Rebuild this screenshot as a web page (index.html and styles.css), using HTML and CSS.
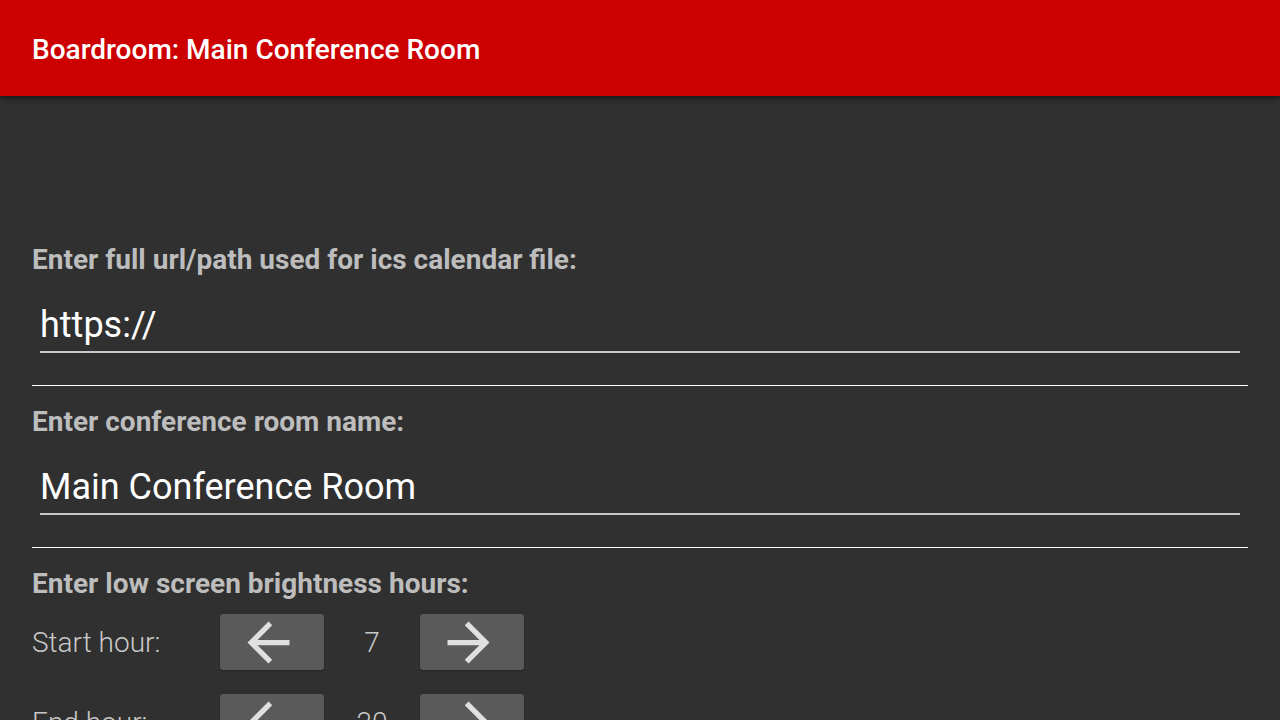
FILE: index.html
```html
<!DOCTYPE html>
<html>
<head>
<meta charset="utf-8">
<link rel="stylesheet" href="styles.css">
</head>
<body>
<header class="appbar">
  <h1 class="title">Boardroom: Main Conference Room</h1>
</header>
<main class="content">
  <section class="field">
    <label class="label">Enter full url/path used for ics calendar file:</label>
    <div class="input">https://</div>
  </section>
  <hr class="divider">
  <section class="field">
    <label class="label">Enter conference room name:</label>
    <div class="input">Main Conference Room</div>
  </section>
  <hr class="divider">
  <section class="hours">
    <label class="label">Enter low screen brightness hours:</label>
    <div class="hour-row">
      <span class="hour-label">Start hour:</span>
      <button class="step"><svg viewBox="0 0 24 24" width="63" height="63"><path d="M20 11H7.83l5.59-5.59L12 4l-8 8 8 8 1.41-1.41L7.83 13H20v-2z" fill="#e0e0e0"/></svg></button>
      <span class="hour-value">7</span>
      <button class="step"><svg viewBox="0 0 24 24" width="63" height="63"><path d="M12 4l-1.41 1.41L16.17 11H4v2h12.17l-5.58 5.59L12 20l8-8z" fill="#e0e0e0"/></svg></button>
    </div>
    <div class="hour-row">
      <span class="hour-label">End hour:</span>
      <button class="step"><svg viewBox="0 0 24 24" width="63" height="63"><path d="M20 11H7.83l5.59-5.59L12 4l-8 8 8 8 1.41-1.41L7.83 13H20v-2z" fill="#e0e0e0"/></svg></button>
      <span class="hour-value">20</span>
      <button class="step"><svg viewBox="0 0 24 24" width="63" height="63"><path d="M12 4l-1.41 1.41L16.17 11H4v2h12.17l-5.58 5.59L12 20l8-8z" fill="#e0e0e0"/></svg></button>
    </div>
  </section>
</main>
</body>
</html>
```
FILE: styles.css
```css
html, body {
  margin: 0;
  padding: 0;
  height: 100%;
  overflow: hidden;
}
body {
  background: #303030;
  font-family: Roboto, "Liberation Sans", sans-serif;
  color: #ffffff;
}
.appbar {
  height: 96px;
  background: #cc0000;
  display: flex;
  align-items: center;
  padding: 0 32px;
  box-shadow: 0 2px 4px rgba(0,0,0,0.35), 0 4px 8px rgba(0,0,0,0.2);
  position: relative;
  z-index: 1;
}
.title {
  margin: 0;
  font-size: 28px;
  font-weight: 500;
  color: #ffffff;
  line-height: 32px;
  padding-top: 4px;
}
.content {
  padding: 148px 32px 0;
}
.label {
  display: block;
  font-size: 28px;
  font-weight: 700;
  line-height: 32px;
  color: #bdbdbd;
}
.input {
  margin: 29px 8px 0;
  font-size: 36px;
  line-height: 40px;
  padding-bottom: 6px;
  border-bottom: 2px solid #c8c8c8;
  color: #ffffff;
}
.divider {
  margin: 32px 0 20px;
  border: 0;
  height: 1px;
  background: #ffffff;
}
.hour-row {
  display: flex;
  align-items: center;
  height: 56px;
  margin-top: 14px;
}
.hour-row + .hour-row {
  margin-top: 24px;
}
.hour-label {
  width: 188px;
  font-size: 28px;
  font-weight: 300;
  color: #c8c8c8;
}
.hour-value {
  width: 96px;
  text-align: center;
  font-size: 28px;
  font-weight: 300;
  color: #c8c8c8;
}
.step {
  width: 104px;
  height: 56px;
  border: 0;
  border-radius: 3px;
  background: #5a5a5a;
  display: flex;
  align-items: center;
  justify-content: center;
  padding: 0;
  overflow: hidden;
  box-shadow: 0 1px 2px rgba(0,0,0,0.3);
}
.step svg {
  display: block;
  flex: none;
  margin-right: 8px;
}
```
